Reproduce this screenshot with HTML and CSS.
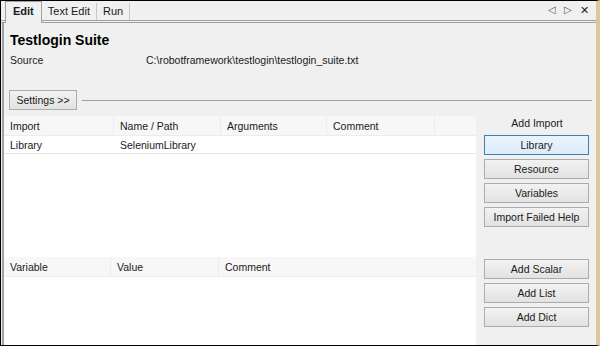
FILE: index.html
```html
<!DOCTYPE html>
<html lang="en">
<head>
    <meta charset="UTF-8">
    <title>Testlogin Suite</title>
    <link rel="stylesheet" href="styles.css">
</head>
<body>
    <div class="frame">
        <div class="tabbar">
            <div class="tab active">Edit</div>
            <div class="tab">Text Edit</div>
            <div class="tab">Run</div>
            <div class="tab-tools">
                <span class="arrow">&#9665;</span>
                <span class="arrow">&#9655;</span>
                <span class="close">&#10005;</span>
            </div>
        </div>
        <div class="panel">
            <h1>Testlogin Suite</h1>
            <div class="source">
                <span class="source-label">Source</span>
                <span>C:\robotframework\testlogin\testlogin_suite.txt</span>
            </div>
            <div class="settings">
                <button class="btn settings-btn">Settings &gt;&gt;</button>
                <div class="rule"></div>
            </div>
            <div class="body">
                <div class="tables">
                    <div class="grid imports">
                        <div class="row head">
                            <div class="cell c1">Import</div>
                            <div class="cell c2">Name / Path</div>
                            <div class="cell c3">Arguments</div>
                            <div class="cell c4">Comment</div>
                            <div class="cell c5"></div>
                        </div>
                        <div class="row">
                            <div class="cell c1">Library</div>
                            <div class="cell c2">SeleniumLibrary</div>
                            <div class="cell c3"></div>
                            <div class="cell c4"></div>
                            <div class="cell c5"></div>
                        </div>
                    </div>
                    <div class="grid variables">
                        <div class="row head">
                            <div class="cell v1">Variable</div>
                            <div class="cell v2">Value</div>
                            <div class="cell v3">Comment</div>
                        </div>
                    </div>
                </div>
                <div class="side">
                    <div class="side-top">
                        <div class="side-label">Add Import</div>
                        <button class="btn side-btn focused">Library</button>
                        <button class="btn side-btn">Resource</button>
                        <button class="btn side-btn">Variables</button>
                        <button class="btn side-btn">Import Failed Help</button>
                    </div>
                    <div class="side-bottom">
                        <button class="btn side-btn">Add Scalar</button>
                        <button class="btn side-btn">Add List</button>
                        <button class="btn side-btn">Add Dict</button>
                    </div>
                </div>
            </div>
        </div>
    </div>
</body>
</html>
```

FILE: styles.css
```css
* {
    box-sizing: border-box;
}
body {
    margin: 0;
    width: 600px;
    height: 346px;
    background: #f0f0f0;
    font-family: "Liberation Sans", Arial, sans-serif;
    font-size: 10.5px;
    color: #1a1a1a;
}
.frame {
    width: 600px;
    height: 346px;
    border: 1px solid #000;
    border-right: 4px solid #dcc79a;
    display: flex;
    flex-direction: column;
    position: relative;
}
.frame::after {
    content: "";
    position: absolute;
    top: -1px;
    right: -5px;
    width: 1px;
    height: 346px;
    background: #000;
}
.tabbar {
    height: 22px;
    display: flex;
    align-items: flex-end;
    padding-left: 4px;
    border-bottom: 3px double #a0a0a0;
    font-size: 11px;
}
.tab {
    height: 17px;
    padding: 0 6px;
    line-height: 16px;
    border-right: 1px solid #c8c8c8;
}
.tab.active {
    font-weight: bold;
    padding: 0 7px;
    line-height: 18px;
    background: #f0f0f0;
    border: 1px solid #a0a0a0;
    border-bottom: none;
    margin-bottom: -3px;
    height: 22px;
}
.tab-tools {
    margin-left: auto;
    display: flex;
    gap: 8px;
    padding-right: 7px;
    align-self: center;
    color: #555;
    font-size: 10px;
}
.close {
    color: #222;
    font-size: 11px;
}
.panel {
    flex: 1;
    border-left: 2px solid #a0a0a0;
    margin-left: 1px;
    display: flex;
    flex-direction: column;
}
h1 {
    margin: 9px 0 0 6px;
    font-size: 14px;
    font-weight: bold;
    color: #000;
}
.source {
    display: flex;
    margin: 6px 0 0 6px;
}
.source-label {
    width: 136px;
}
.settings {
    display: flex;
    align-items: center;
    margin: 24px 4px 0 5px;
}
.btn {
    font-family: inherit;
    font-size: 10.5px;
    color: #1a1a1a;
    background: linear-gradient(#f2f2f2, #e2e2e2);
    border: 1px solid #acacac;
    padding: 0;
    height: 20px;
}
.settings-btn {
    width: 68px;
}
.rule {
    flex: 1;
    height: 1px;
    background: #a0a0a0;
    margin-left: 5px;
}
.body {
    flex: 1;
    display: flex;
    margin-top: 6px;
}
.tables {
    width: 472px;
    display: flex;
    flex-direction: column;
    background: #fff;
}
.imports {
    height: 141px;
}
.variables {
    flex: 1;
}
.row {
    display: flex;
    height: 18px;
    border-bottom: 1px solid #e6e6e6;
}
.row.head {
    height: 20px;
    background: #f7f7f7;
    border-bottom: 1px solid #ececec;
}
.cell {
    padding: 3px 0 0 6px;
    white-space: nowrap;
}
.head .cell {
    border-right: 1px solid #ececec;
    padding-top: 4px;
}
.head .cell:last-child {
    border-right: none;
}
.c1 { width: 110px; }
.c2 { width: 107px; }
.c3 { width: 106px; }
.c4 { width: 108px; }
.c5 { flex: 1; }
.v1 { width: 107px; }
.v2 { width: 108px; }
.v3 { flex: 1; }
.side {
    flex: 1;
    display: flex;
    flex-direction: column;
    padding: 0 6px 0 8px;
}
.side-top {
    display: flex;
    flex-direction: column;
    gap: 4px;
    height: 143px;
}
.side-label {
    text-align: center;
    height: 15px;
    padding-top: 1px;
}
.side-btn {
    width: 105px;
}
.side-btn.focused {
    border-color: #3c7fb1;
    background: linear-gradient(#eaf4fc, #dcecfc);
}
.side-bottom {
    display: flex;
    flex-direction: column;
    gap: 4px;
}
```
